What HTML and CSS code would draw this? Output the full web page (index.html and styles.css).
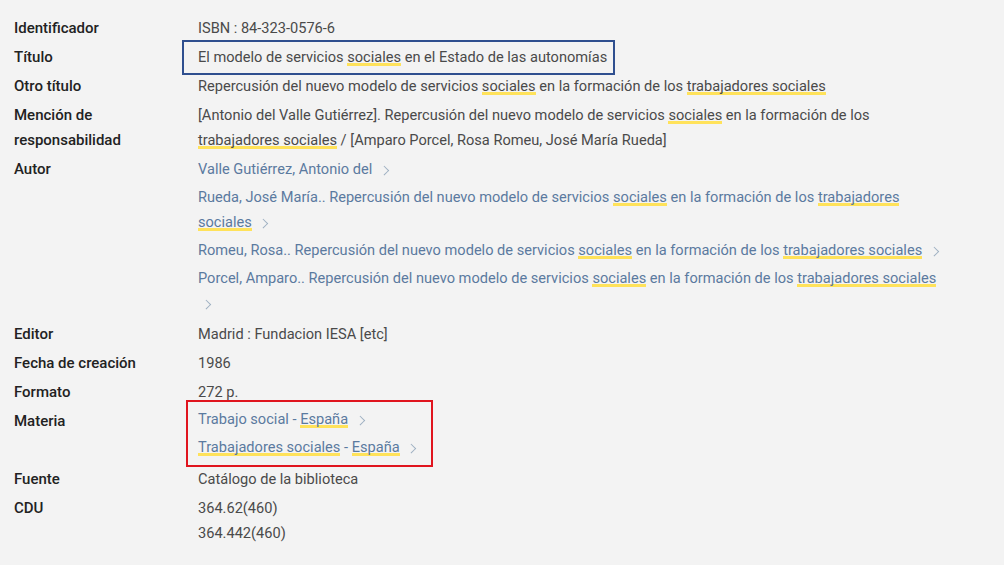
FILE: index.html
```html
<!DOCTYPE html>
<html lang="es">
<head>
<meta charset="utf-8">
<link rel="stylesheet" href="styles.css">
</head>
<body>
<dl class="record">
  <dt>Identificador</dt>
  <dd>ISBN : 84-323-0576-6</dd>

  <dt>Título</dt>
  <dd><span class="box-blue">El modelo de servicios <mark>sociales</mark> en el Estado de las autonomías</span></dd>

  <dt>Otro título</dt>
  <dd>Repercusión del nuevo modelo de servicios <mark>sociales</mark> en la formación de los <mark>trabajadores sociales</mark></dd>

  <dt>Mención de<br>responsabilidad</dt>
  <dd>[Antonio del Valle Gutiérrez]. Repercusión del nuevo modelo de servicios <mark>sociales</mark> en la formación de los <mark>trabajadores sociales</mark> / [Amparo Porcel, Rosa Romeu, José María Rueda]</dd>

  <dt>Autor</dt>
  <dd class="links authors">
    <a class="lnk">Valle Gutiérrez, Antonio del <i class="chev"></i></a>
    <a class="lnk">Rueda, José María.. Repercusión del nuevo modelo de servicios <mark>sociales</mark> en la formación de los <mark>trabajadores</mark> <mark>sociales</mark> <i class="chev"></i></a>
    <a class="lnk">Romeu, Rosa.. Repercusión del nuevo modelo de servicios <mark>sociales</mark> en la formación de los <mark>trabajadores sociales</mark> <i class="chev"></i></a>
    <a class="lnk">Porcel, Amparo.. Repercusión del nuevo modelo de servicios <mark>sociales</mark> en la formación de los <mark>trabajadores sociales</mark> <i class="chev"></i></a>
  </dd>

  <dt>Editor</dt>
  <dd>Madrid : Fundacion IESA [etc]</dd>

  <dt>Fecha de creación</dt>
  <dd>1986</dd>

  <dt>Formato</dt>
  <dd>272 p.</dd>

  <dt>Materia</dt>
  <dd class="links">
    <div class="box-red">
      <a class="lnk">Trabajo social - <mark>España</mark> <i class="chev"></i></a>
      <a class="lnk"><mark>Trabajadores sociales</mark> - <mark>España</mark> <i class="chev"></i></a>
    </div>
  </dd>

  <dt>Fuente</dt>
  <dd>Catálogo de la biblioteca</dd>

  <dt>CDU</dt>
  <dd>364.62(460)<br>364.442(460)</dd>
</dl>
</body>
</html>
```

FILE: styles.css
```css
html, body {
  margin: 0;
  padding: 0;
  background: #f3f3f3;
}

body {
  font-family: Roboto, "Liberation Sans", sans-serif;
  font-size: 14.6px;
  color: #4a4a4a;
}

.record {
  margin: 0;
  padding: 16px 59px 0 14px;
  display: grid;
  grid-template-columns: 184px 1fr;
  row-gap: 4px;
  line-height: 25px;
}

.record dt {
  margin: 0;
  font-weight: 500;
  font-size: 15px;
  color: #222;
}

.record dd {
  margin: 0;
}

mark {
  background: linear-gradient(to top, #ffe25a 0, #ffe25a 3px, transparent 3px);
  color: inherit;
}

.links {
  display: flex;
  flex-direction: column;
  gap: 3px;
}

.record dd.authors {
  margin-bottom: 2px;
}

.lnk {
  display: block;
  color: #5b7a9f;
}

.chev {
  display: inline-block;
  width: 5.5px;
  height: 5.5px;
  margin-left: 5px;
  border-right: 1.5px solid #9eb0c2;
  border-top: 1.5px solid #9eb0c2;
  transform: rotate(45deg);
  vertical-align: 1px;
}

.box-blue {
  display: inline-block;
  border: 2px solid #2f4f8f;
  padding: 3px 6px 3px 14px;
  margin: -5px 0 -5px -16px;
}

.box-red {
  display: flex;
  flex-direction: column;
  gap: 3px;
  border: 2px solid #e0141e;
  padding: 5px 16px 5px 10px;
  margin: -9px 0 -4px -12px;
  width: max-content;
}
```
